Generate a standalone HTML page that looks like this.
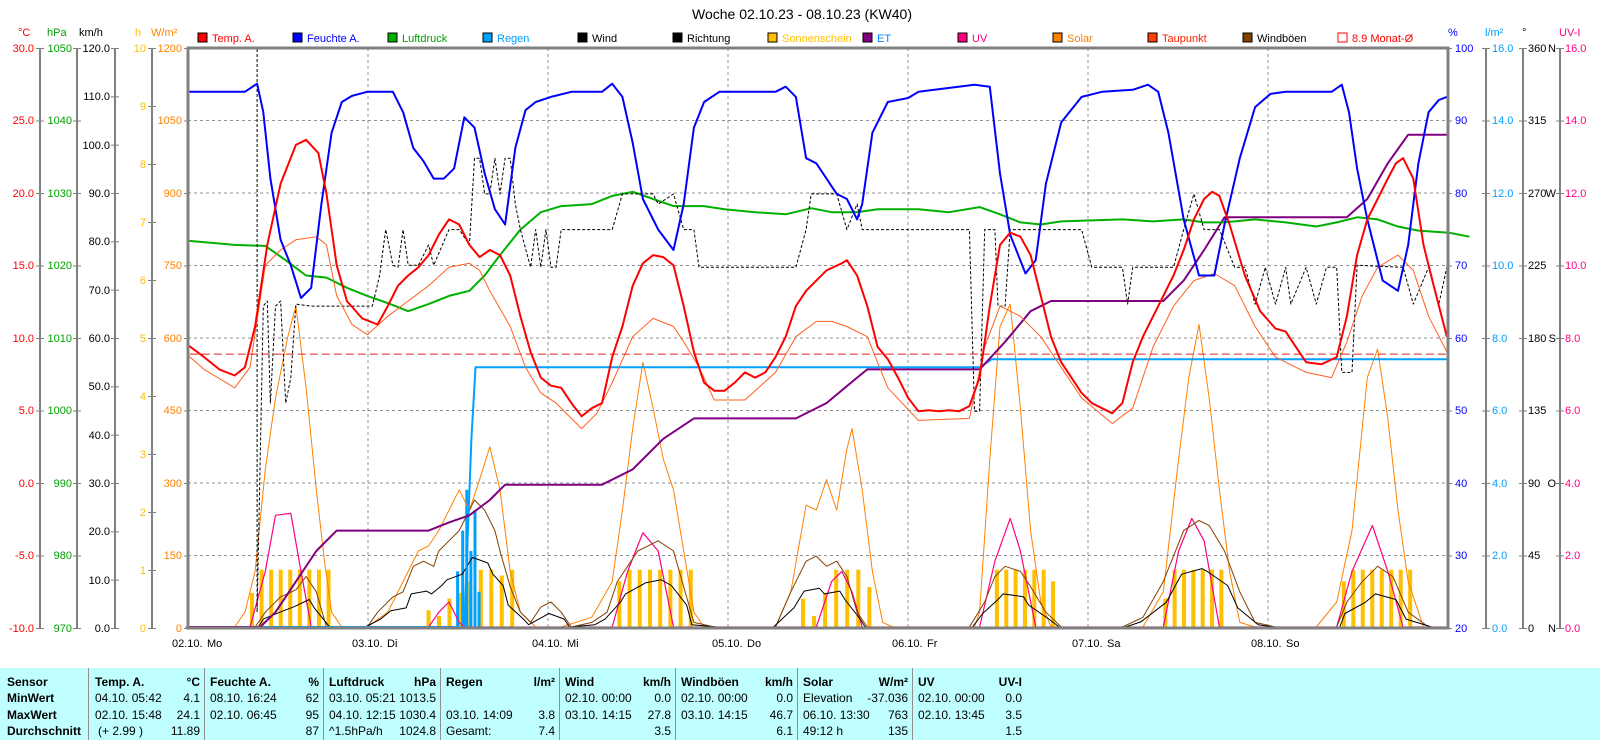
<!DOCTYPE html>
<html><head><meta charset="utf-8">
<style>
html,body{margin:0;padding:0;background:#fff;}
svg{display:block;font-family:"Liberation Sans",sans-serif;}
.t{font-size:11px;}
</style></head><body>
<svg id="s" width="1600" height="740" viewBox="0 0 1600 740">
<rect x="0" y="0" width="1600" height="740" fill="#fff"/>
<text x="802" y="19" font-size="14" text-anchor="middle">Woche 02.10.23 - 08.10.23 (KW40)</text>

<g class="t" font-size="11">
<rect x="198" y="33" width="9" height="9" fill="#f00" stroke="#000"/><text x="212" y="42" fill="#f00">Temp. A.</text>
<rect x="293" y="33" width="9" height="9" fill="#00f" stroke="#000"/><text x="307" y="42" fill="#00f">Feuchte A.</text>
<rect x="388" y="33" width="9" height="9" fill="#00b000" stroke="#000"/><text x="402" y="42" fill="#00a000">Luftdruck</text>
<rect x="483" y="33" width="9" height="9" fill="#00a0ff" stroke="#000"/><text x="497" y="42" fill="#00a0ff">Regen</text>
<rect x="578" y="33" width="9" height="9" fill="#000" stroke="#000"/><text x="592" y="42" fill="#000">Wind</text>
<rect x="673" y="33" width="9" height="9" fill="#000" stroke="#000"/><text x="687" y="42" fill="#000">Richtung</text>
<rect x="768" y="33" width="9" height="9" fill="#ffc000" stroke="#000"/><text x="782" y="42" fill="#ffc000">Sonnenschein</text>
<rect x="863" y="33" width="9" height="9" fill="#800080" stroke="#000"/><text x="877" y="42" fill="#0080ff">ET</text>
<rect x="958" y="33" width="9" height="9" fill="#ff0080" stroke="#000"/><text x="972" y="42" fill="#ff0080">UV</text>
<rect x="1053" y="33" width="9" height="9" fill="#ff8000" stroke="#000"/><text x="1067" y="42" fill="#ff8000">Solar</text>
<rect x="1148" y="33" width="9" height="9" fill="#ff4000" stroke="#000"/><text x="1162" y="42" fill="#ff2000">Taupunkt</text>
<rect x="1243" y="33" width="9" height="9" fill="#804000" stroke="#000"/><text x="1257" y="42" fill="#000">Windböen</text>
<rect x="1338" y="33" width="9" height="9" fill="#fff" stroke="#f00"/><text x="1352" y="42" fill="#f00">8.9 Monat-Ø</text>
</g>

<g class="t">
<text x="18" y="36" fill="#f00">°C</text>
<text x="47" y="36" fill="#00a000">hPa</text>
<text x="79" y="36" fill="#000">km/h</text>
<text x="135" y="36" fill="#ffc000">h</text>
<text x="151" y="36" fill="#ff8000">W/m²</text>
<text x="1448" y="36" fill="#00f">%</text>
<text x="1485" y="36" fill="#00a0ff">l/m²</text>
<text x="1522" y="36" fill="#000">°</text>
<text x="1559" y="36" fill="#ff0080">UV-I</text>
</g>

<g stroke="#808080" stroke-width="2">
<line x1="40" y1="48" x2="40" y2="628"/>
<line x1="77" y1="48" x2="77" y2="628"/>
<line x1="115" y1="48" x2="115" y2="628"/>
<line x1="152" y1="48" x2="152" y2="628"/>
<line x1="1486" y1="48" x2="1486" y2="628"/>
<line x1="1523" y1="48" x2="1523" y2="628"/>
<line x1="1560" y1="48" x2="1560" y2="628"/>
</g>
<g id="ticks" stroke="#808080" stroke-width="1"></g>

<g stroke="#909090" stroke-dasharray="3,3" stroke-width="1">
<line x1="188" y1="120.5" x2="1448" y2="120.5"/>
<line x1="188" y1="193" x2="1448" y2="193"/>
<line x1="188" y1="265.5" x2="1448" y2="265.5"/>
<line x1="188" y1="338" x2="1448" y2="338"/>
<line x1="188" y1="410.5" x2="1448" y2="410.5"/>
<line x1="188" y1="483" x2="1448" y2="483"/>
<line x1="188" y1="555.5" x2="1448" y2="555.5"/>
<line x1="368" y1="48" x2="368" y2="628"/>
<line x1="548" y1="48" x2="548" y2="628"/>
<line x1="728" y1="48" x2="728" y2="628"/>
<line x1="908" y1="48" x2="908" y2="628"/>
<line x1="1088" y1="48" x2="1088" y2="628"/>
<line x1="1268" y1="48" x2="1268" y2="628"/>
</g>

<g id="data"></g>

<rect x="188" y="48" width="1260" height="580" fill="none" stroke="#808080" stroke-width="3"/>

<g class="t" text-anchor="end" fill="#f00">
<text x="34" y="52">30.0</text><text x="34" y="124">25.0</text><text x="34" y="197">20.0</text><text x="34" y="269">15.0</text><text x="34" y="342">10.0</text><text x="34" y="414">5.0</text><text x="34" y="487">0.0</text><text x="34" y="559">-5.0</text><text x="34" y="632">-10.0</text>
</g>
<g class="t" text-anchor="end" fill="#00a000">
<text x="72" y="52">1050</text><text x="72" y="124">1040</text><text x="72" y="197">1030</text><text x="72" y="269">1020</text><text x="72" y="342">1010</text><text x="72" y="414">1000</text><text x="72" y="487">990</text><text x="72" y="559">980</text><text x="72" y="632">970</text>
</g>
<g class="t" text-anchor="end" fill="#000">
<text x="110" y="52">120.0</text><text x="110" y="100">110.0</text><text x="110" y="149">100.0</text><text x="110" y="197">90.0</text><text x="110" y="245">80.0</text><text x="110" y="294">70.0</text><text x="110" y="342">60.0</text><text x="110" y="390">50.0</text><text x="110" y="439">40.0</text><text x="110" y="487">30.0</text><text x="110" y="535">20.0</text><text x="110" y="584">10.0</text><text x="110" y="632">0.0</text>
</g>
<g class="t" text-anchor="end" fill="#ffc000">
<text x="146" y="52">10</text><text x="146" y="110">9</text><text x="146" y="168">8</text><text x="146" y="226">7</text><text x="146" y="284">6</text><text x="146" y="342">5</text><text x="146" y="400">4</text><text x="146" y="458">3</text><text x="146" y="516">2</text><text x="146" y="574">1</text><text x="146" y="632">0</text>
</g>
<g class="t" text-anchor="end" fill="#ff8000">
<text x="182" y="52">1200</text><text x="182" y="124">1050</text><text x="182" y="197">900</text><text x="182" y="269">750</text><text x="182" y="342">600</text><text x="182" y="414">450</text><text x="182" y="487">300</text><text x="182" y="559">150</text><text x="182" y="632">0</text>
</g>
<g class="t" fill="#00f">
<text x="1455" y="52">100</text><text x="1455" y="124">90</text><text x="1455" y="197">80</text><text x="1455" y="269">70</text><text x="1455" y="342">60</text><text x="1455" y="414">50</text><text x="1455" y="487">40</text><text x="1455" y="559">30</text><text x="1455" y="632">20</text>
</g>
<g class="t" fill="#00a0ff">
<text x="1492" y="52">16.0</text><text x="1492" y="124">14.0</text><text x="1492" y="197">12.0</text><text x="1492" y="269">10.0</text><text x="1492" y="342">8.0</text><text x="1492" y="414">6.0</text><text x="1492" y="487">4.0</text><text x="1492" y="559">2.0</text><text x="1492" y="632">0.0</text>
</g>
<g class="t" fill="#000">
<text x="1528" y="52">360</text><text x="1528" y="124">315</text><text x="1528" y="197">270</text><text x="1528" y="269">225</text><text x="1528" y="342">180</text><text x="1528" y="414">135</text><text x="1528" y="487">90</text><text x="1528" y="559">45</text><text x="1528" y="632">0</text>
</g>
<g class="t" fill="#000" text-anchor="end">
<text x="1556" y="52">N</text><text x="1556" y="197">W</text><text x="1556" y="342">S</text><text x="1556" y="487">O</text><text x="1556" y="632">N</text>
</g>
<g class="t" fill="#ff0080">
<text x="1565" y="52">16.0</text><text x="1565" y="124">14.0</text><text x="1565" y="197">12.0</text><text x="1565" y="269">10.0</text><text x="1565" y="342">8.0</text><text x="1565" y="414">6.0</text><text x="1565" y="487">4.0</text><text x="1565" y="559">2.0</text><text x="1565" y="632">0.0</text>
</g>

<g class="t" fill="#000" font-size="12">
<text x="172" y="647">02.10.</text><text x="207" y="647">Mo</text>
<text x="352" y="647">03.10.</text><text x="387" y="647">Di</text>
<text x="532" y="647">04.10.</text><text x="567" y="647">Mi</text>
<text x="712" y="647">05.10.</text><text x="747" y="647">Do</text>
<text x="892" y="647">06.10.</text><text x="927" y="647">Fr</text>
<text x="1072" y="647">07.10.</text><text x="1107" y="647">Sa</text>
<text x="1251" y="647">08.10.</text><text x="1286" y="647">So</text>
</g>

<rect x="0" y="668" width="1600" height="72" fill="#c0ffff"/>
<g stroke="#909090" stroke-width="1">
<line x1="88.5" y1="668" x2="88.5" y2="740"/>
<line x1="204.5" y1="668" x2="204.5" y2="740"/>
<line x1="323.5" y1="668" x2="323.5" y2="740"/>
<line x1="440.5" y1="668" x2="440.5" y2="740"/>
<line x1="559.5" y1="668" x2="559.5" y2="740"/>
<line x1="675.5" y1="668" x2="675.5" y2="740"/>
<line x1="797.5" y1="668" x2="797.5" y2="740"/>
<line x1="912.5" y1="668" x2="912.5" y2="740"/>
</g>
<g font-size="12" fill="#000">
<g font-weight="bold">
<text x="7" y="686">Sensor</text><text x="7" y="702">MinWert</text><text x="7" y="719">MaxWert</text><text x="7" y="735">Durchschnitt</text>
<text x="95" y="686">Temp. A.</text><text x="200" y="686" text-anchor="end">°C</text>
<text x="210" y="686">Feuchte A.</text><text x="319" y="686" text-anchor="end">%</text>
<text x="329" y="686">Luftdruck</text><text x="436" y="686" text-anchor="end">hPa</text>
<text x="446" y="686">Regen</text><text x="555" y="686" text-anchor="end">l/m²</text>
<text x="565" y="686">Wind</text><text x="671" y="686" text-anchor="end">km/h</text>
<text x="681" y="686">Windböen</text><text x="793" y="686" text-anchor="end">km/h</text>
<text x="803" y="686">Solar</text><text x="908" y="686" text-anchor="end">W/m²</text>
<text x="918" y="686">UV</text><text x="1022" y="686" text-anchor="end">UV-I</text>
</g>
<text x="95" y="702">04.10.  05:42</text><text x="200" y="702" text-anchor="end">4.1</text>
<text x="95" y="719">02.10.  15:48</text><text x="200" y="719" text-anchor="end">24.1</text>
<text x="98" y="735">(+ 2.99 )</text><text x="200" y="735" text-anchor="end">11.89</text>
<text x="210" y="702">08.10.  16:24</text><text x="319" y="702" text-anchor="end">62</text>
<text x="210" y="719">02.10.  06:45</text><text x="319" y="719" text-anchor="end">95</text>
<text x="319" y="735" text-anchor="end">87</text>
<text x="329" y="702">03.10.  05:21</text><text x="436" y="702" text-anchor="end">1013.5</text>
<text x="329" y="719">04.10.  12:15</text><text x="436" y="719" text-anchor="end">1030.4</text>
<text x="329" y="735">^1.5hPa/h</text><text x="436" y="735" text-anchor="end">1024.8</text>
<text x="446" y="719">03.10.  14:09</text><text x="555" y="719" text-anchor="end">3.8</text>
<text x="446" y="735">Gesamt:</text><text x="555" y="735" text-anchor="end">7.4</text>
<text x="565" y="702">02.10.  00:00</text><text x="671" y="702" text-anchor="end">0.0</text>
<text x="565" y="719">03.10.  14:15</text><text x="671" y="719" text-anchor="end">27.8</text>
<text x="671" y="735" text-anchor="end">3.5</text>
<text x="681" y="702">02.10.  00:00</text><text x="793" y="702" text-anchor="end">0.0</text>
<text x="681" y="719">03.10.  14:15</text><text x="793" y="719" text-anchor="end">46.7</text>
<text x="793" y="735" text-anchor="end">6.1</text>
<text x="803" y="702">Elevation</text><text x="908" y="702" text-anchor="end">-37.036</text>
<text x="803" y="719">06.10.  13:30</text><text x="908" y="719" text-anchor="end">763</text>
<text x="803" y="735">49:12 h</text><text x="908" y="735" text-anchor="end">135</text>
<text x="918" y="702">02.10.  00:00</text><text x="1022" y="702" text-anchor="end">0.0</text>
<text x="918" y="719">02.10.  13:45</text><text x="1022" y="719" text-anchor="end">3.5</text>
<text x="1022" y="735" text-anchor="end">1.5</text>
</g>
</svg>
<script>
(function(){
var NS="http://www.w3.org/2000/svg";
var g=document.getElementById("data");
var S=1600/1568;
function X(x){return x*S;}
function Y(y){return Math.min(y*S,627);}
function P(arr){var s=[];for(var i=0;i<arr.length;i+=2){s.push(X(arr[i]).toFixed(1)+","+Y(arr[i+1]).toFixed(1));}return s.join(" ");}
function line(arr,col,w,dash){var e=document.createElementNS(NS,"polyline");e.setAttribute("points",P(arr));e.setAttribute("fill","none");e.setAttribute("stroke",col);e.setAttribute("stroke-width",w);e.setAttribute("stroke-linejoin","round");if(dash)e.setAttribute("stroke-dasharray",dash);g.appendChild(e);}
function rect(x,y1,y2,col,w){var e=document.createElementNS(NS,"rect");e.setAttribute("x",X(x));e.setAttribute("y",Y(y1));e.setAttribute("width",w);e.setAttribute("height",Math.max(0,Y(y2)-Y(y1)));e.setAttribute("fill",col);g.appendChild(e);}
var tk=document.getElementById("ticks");
function tick(x1,x2,y){var e=document.createElementNS(NS,"line");e.setAttribute("x1",x1);e.setAttribute("x2",x2);e.setAttribute("y1",y);e.setAttribute("y2",y);tk.appendChild(e);}
for(var k=0;k<9;k++){var y=48+72.5*k+0.5;tick(36,44,y);tick(73,81,y);tick(184,188,y);tick(1448,1452,y);tick(1482,1490,y);tick(1519,1527,y);tick(1556,1564,y);}
for(k=0;k<13;k++){tick(111,119,48+580/12*k+0.5);}
for(k=0;k<11;k++){tick(148,156,48+58*k+0.5);}
var days=[[245,320,[0.6,1,1,1,1,1,1,1,1]],[418,500,[0.3,0.2,0.5,0.6,0.8,1,1,0.9,1]],[605,675,[0.8,1,1,1,1,1,1,1]],[785,850,[0.5,0.2,0.6,1,1,1,0.7]],[975,1030,[1,1,1,1,1,1,0.8]],[1140,1195,[0.5,1,1,1,1,1,1]],[1315,1380,[0.8,1,1,1,1,1,1,1]]];
days.forEach(function(d){var n=d[2].length;var st=(d[1]-d[0])/(n-1);for(var i=0;i<n;i++){var h=56.7*d[2][i];rect(d[0]+i*st,615-h,615,"#ffc000",4);}});
[[447,560],[452,520],[456,480],[460,540],[464,500],[468,580]].forEach(function(b){rect(b[0],b[1],615,"#00a0ff",3);});
line([184,615,230,615,240,600,250,560,260,460,270,390,282,330,290,300,300,380,310,480,318,550,325,600,335,615,360,615,380,600,400,560,410,540,420,535,430,520,440,500,450,480,460,500,470,470,480,438,490,480,500,560,510,600,525,615,550,615,580,605,600,570,610,500,620,420,630,355,640,400,650,450,660,480,670,540,680,600,690,615,760,615,775,580,790,495,800,500,810,470,820,500,830,440,835,420,845,480,855,560,865,610,875,615,955,615,960,600,970,450,980,320,990,298,1000,400,1010,520,1020,590,1030,615,1120,615,1140,580,1155,450,1165,370,1175,318,1185,390,1195,480,1205,560,1215,610,1230,615,1290,615,1310,590,1325,520,1340,370,1350,342,1360,410,1370,500,1380,570,1395,615,1418,615],"#ff8000",1);
line([184,615,245,615,260,560,270,505,285,503,295,560,305,615,420,615,430,600,440,590,450,610,455,615,600,615,615,560,630,522,645,540,660,615,800,615,815,570,825,560,835,580,845,615,960,615,975,550,990,508,1000,540,1015,615,1140,615,1155,540,1168,508,1180,530,1195,615,1310,615,1325,560,1345,515,1360,560,1375,615,1418,615],"#ff0080",1.2);
var gust=[184,615,250,615,260,600,275,585,290,578,300,565,310,580,320,615,360,615,370,600,385,585,395,580,405,555,415,550,425,555,430,540,440,530,450,520,465,490,475,500,485,520,490,540,500,575,510,600,520,610,530,595,540,590,550,600,560,615,580,610,595,600,605,570,615,555,625,540,635,535,645,530,660,540,670,575,680,610,700,615,760,615,775,580,790,550,800,545,810,555,820,550,830,565,840,600,850,615,950,615,965,590,975,565,985,555,1000,560,1010,575,1025,600,1040,615,1100,615,1120,605,1140,570,1160,520,1175,510,1185,515,1200,540,1215,580,1230,610,1250,615,1310,615,1320,590,1335,570,1350,555,1365,565,1380,600,1400,615,1418,615];
line(gust,"#804000",1);
var wind=[];for(var i=0;i<gust.length;i+=2){wind.push(gust[i]+(i%4?3:-2),615-(615-gust[i+1])*0.55);}
line(wind,"#000",1);
line([184,615,455,615,462,430,466,360,960,360,972,352,1420,352],"#00a0ff",2);
line([184,615,255,615,270,600,290,570,310,540,330,520,420,520,440,512,460,505,480,490,495,475,590,475,620,460,650,430,680,410,780,410,810,395,840,370,850,362,960,362,985,335,1010,305,1030,295,1140,295,1160,275,1180,245,1200,213,1320,213,1340,195,1360,160,1380,132,1420,132],"#800080",2);
line([184,236,230,240,260,241,280,255,300,270,320,272,340,282,360,290,380,297,400,305,420,298,440,290,460,285,475,270,490,250,510,225,530,208,550,202,580,200,600,192,620,188,640,195,660,202,690,202,710,205,740,208,770,210,795,204,815,208,840,208,860,205,900,205,930,208,960,203,980,210,1000,218,1020,220,1040,217,1070,216,1100,215,1130,217,1160,215,1180,218,1200,218,1230,215,1260,218,1290,222,1310,218,1330,213,1350,215,1370,222,1390,226,1420,228,1440,232],"#00b000",2);
line([252,48,252,600,258,300,262,295,265,395,270,300,275,295,280,395,285,370,290,298,305,300,365,300,372,270,378,225,385,260,390,262,395,225,400,260,410,260,420,240,425,260,440,225,450,225,460,240,465,155,470,155,475,190,480,190,485,155,490,190,495,155,500,155,505,200,510,225,520,262,525,225,530,262,535,225,540,262,545,262,550,225,600,225,610,190,640,190,645,200,660,190,670,225,680,225,685,262,780,262,790,225,795,190,820,190,830,225,840,200,845,225,950,225,955,403,960,403,965,225,975,225,978,300,985,300,990,225,1060,225,1070,262,1100,262,1105,298,1110,262,1150,262,1160,225,1170,190,1180,225,1195,225,1210,262,1220,262,1230,298,1240,262,1250,298,1260,262,1265,298,1280,262,1290,298,1300,262,1310,262,1315,365,1325,365,1330,260,1375,262,1385,298,1400,262,1410,298,1418,262],"#000",1,"3,2");
line([184,348,200,362,230,380,245,360,260,260,275,245,290,235,310,232,320,240,330,290,345,318,360,328,380,310,400,295,420,280,440,262,460,258,470,265,480,285,500,320,515,360,530,385,545,395,570,420,585,405,600,375,620,330,640,312,660,320,670,335,685,360,700,392,730,392,760,365,780,330,800,315,815,315,830,320,850,330,870,380,900,412,950,410,965,340,980,300,1000,310,1020,330,1040,360,1060,390,1090,415,1110,400,1130,340,1150,300,1170,275,1190,268,1210,280,1230,320,1250,350,1280,365,1305,370,1320,335,1335,290,1350,262,1370,250,1385,265,1400,310,1418,345],"#ff6020",1);
line([186,347,1418,347],"#e02020",1,"8,4");
line([184,90,240,90,252,82,258,110,265,175,275,235,285,260,295,292,305,282,315,200,325,130,335,100,345,94,360,90,385,90,395,110,405,145,415,158,425,175,435,175,445,165,455,115,465,125,475,170,485,205,495,220,505,145,515,108,525,100,540,95,560,90,590,90,600,82,610,95,620,140,630,195,645,225,660,245,670,200,680,125,690,100,705,90,760,90,770,85,780,95,790,155,800,160,810,175,820,190,830,195,840,215,845,200,855,130,870,100,890,96,900,90,955,83,970,85,980,170,990,230,1005,268,1015,255,1025,180,1040,120,1060,95,1080,90,1110,88,1125,83,1135,90,1145,130,1160,215,1175,270,1190,270,1200,220,1215,155,1230,105,1245,92,1260,90,1305,90,1315,83,1322,110,1330,165,1340,215,1355,275,1370,285,1380,240,1390,160,1400,110,1410,98,1418,95],"#0000ff",2);
line([184,338,200,350,215,362,230,368,240,360,250,320,262,240,275,180,290,142,300,137,312,150,320,190,330,260,340,295,355,312,370,318,380,300,390,280,400,270,410,262,420,250,430,230,440,215,450,220,460,240,470,252,480,245,490,250,500,270,510,310,520,345,530,370,540,378,550,380,560,395,570,408,580,400,590,395,600,350,610,320,620,280,630,258,640,250,650,252,660,260,670,300,680,345,690,375,700,383,710,383,720,375,730,365,740,370,750,365,760,350,770,330,780,300,790,285,800,275,810,265,825,258,830,255,840,270,850,300,860,340,870,352,880,370,890,390,900,403,910,402,920,403,930,402,940,403,950,398,960,370,970,300,980,240,990,228,1000,232,1010,250,1020,290,1030,330,1040,355,1050,370,1060,385,1070,395,1080,400,1090,405,1100,395,1110,355,1120,330,1130,310,1140,290,1150,270,1160,245,1170,215,1180,195,1188,188,1195,192,1205,220,1220,270,1235,305,1250,322,1260,325,1270,340,1280,355,1295,357,1310,350,1320,310,1330,250,1340,215,1350,195,1360,175,1368,160,1375,155,1385,175,1395,240,1405,280,1418,330],"#ff0000",2);
})();
</script>
</body></html>
